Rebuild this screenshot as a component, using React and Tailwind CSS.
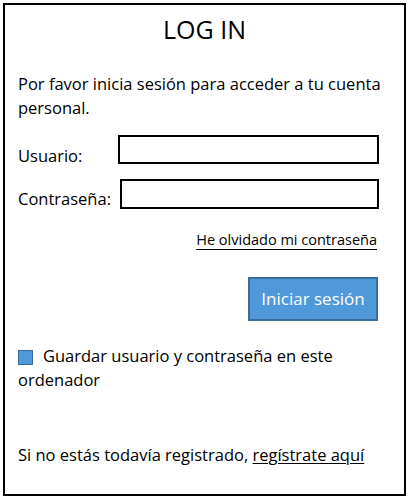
export default function App() {
  return (
    <div className="w-[409px] h-[500px] bg-white pt-[3px] pl-[3px]" style={{ fontFamily: "'Open Sans', Lato, sans-serif" }}>
      <div className="w-[403px] h-[493px] border-2 border-black pl-[13px] pr-[25px] text-black">
        <div className="pt-[8px] text-[25px] leading-[32px] text-center pl-[12px]">LOG IN</div>
        <p className="mt-[27px] -mr-[20px] text-[16.5px] leading-[24px]">
          Por favor inicia sesión para acceder a tu cuenta personal.
        </p>
        <div className="mt-[15px] flex items-start h-[29px]">
          <span className="w-[100px] mt-[9px] text-[16.5px] leading-[24px]">Usuario:</span>
          <div className="flex-1 h-[29px] border-2 border-black bg-white"></div>
        </div>
        <div className="mt-[15px] flex items-start h-[30px]">
          <span className="w-[102px] mt-[8px] text-[16.5px] leading-[24px]">Contraseña:</span>
          <div className="flex-1 h-[30px] border-2 border-black bg-white"></div>
        </div>
        <div className="mt-[21px] flex justify-end pr-[2px]">
          <span className="text-[14.5px] leading-[20px] underline underline-offset-[4px] decoration-1">He olvidado mi contraseña</span>
        </div>
        <div className="mt-[27px] flex justify-end pr-[1px]">
          <button className="w-[130px] h-[44px] bg-[#4f98d9] border-2 border-[#3c6c9b] text-white text-[17px] leading-[24px]">
            Iniciar sesión
          </button>
        </div>
        <p className="mt-[23px] text-[16.5px] leading-[24px]">
          <span className="inline-block w-[15px] h-[15px] bg-[#4f98d9] border border-[#3a6a99] align-[-3px] mr-[10px]"></span>
          Guardar usuario y contraseña en este ordenador
        </p>
        <p className="mt-[51px] -mr-[20px] text-[16.5px] leading-[24px]">
          Si no estás todavía registrado, <span className="underline underline-offset-[2px] decoration-1">regístrate aquí</span>
        </p>
      </div>
    </div>
  );
}
